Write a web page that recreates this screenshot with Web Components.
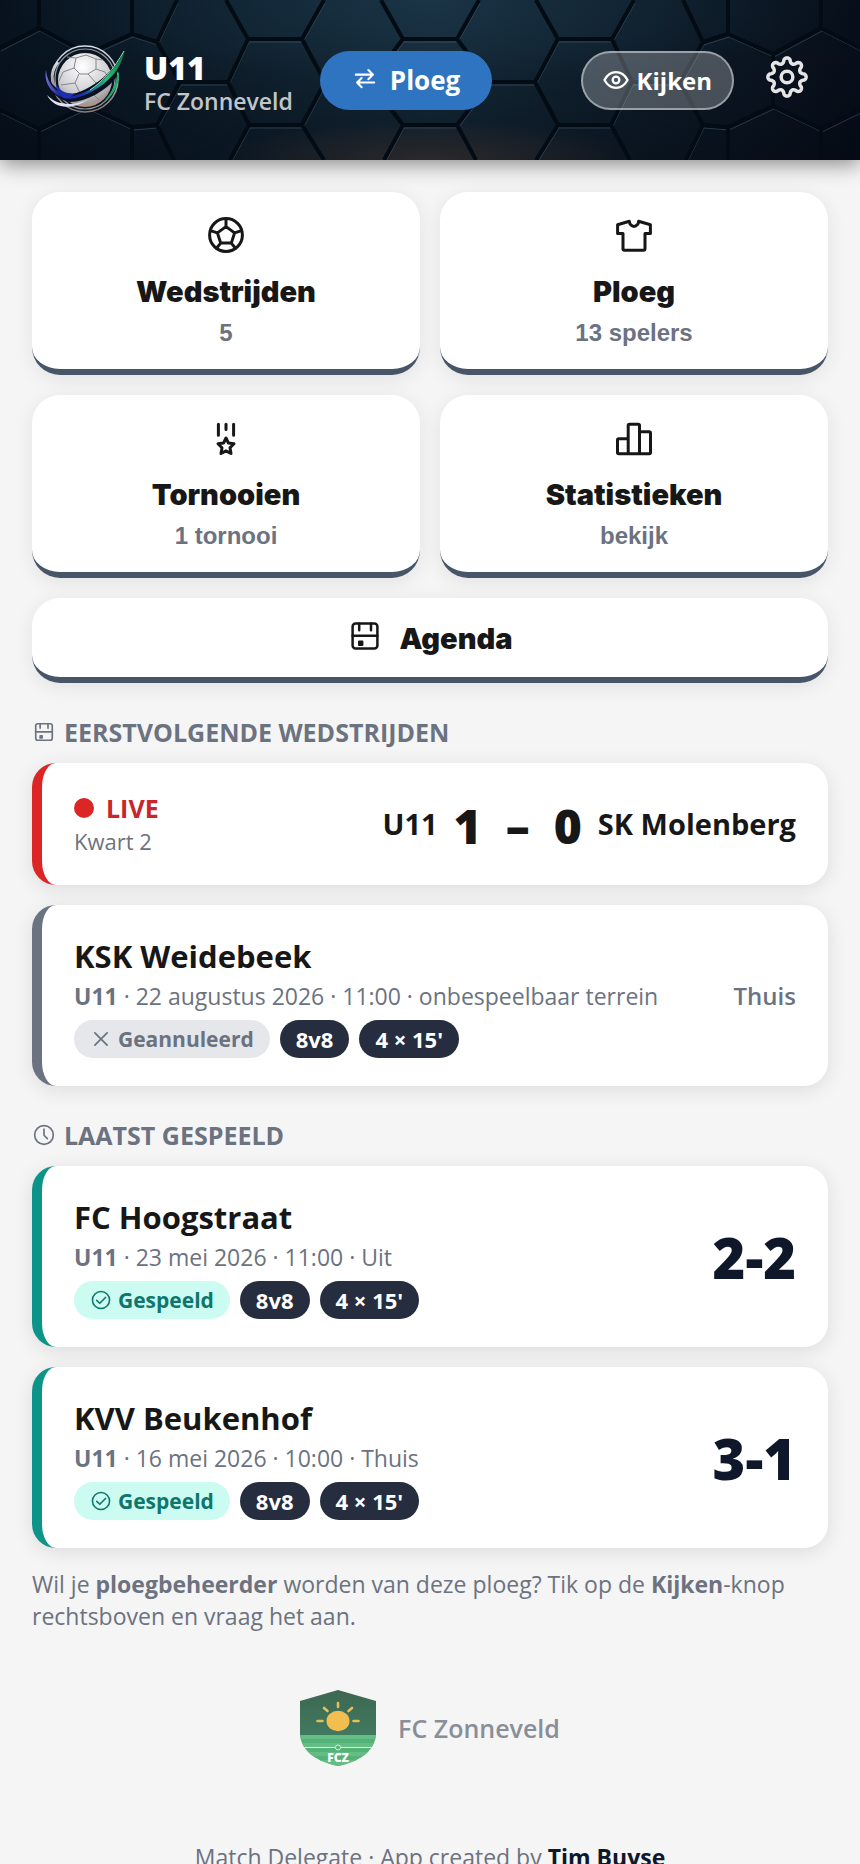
<!DOCTYPE html>
<html lang="nl">
<head>
<meta charset="utf-8">
<meta name="viewport" content="width=device-width, initial-scale=1">
<title>U11 - FC Zonneveld</title>
<style>
    body {
        margin: 0;
        background-color: #f5f5f5;
        color: #171717;
        font-family: "Open Sans", "Noto Sans", sans-serif;
        font-size: 23px;
        line-height: 32px;
    }
    main {
        padding: 32px 32px 0;
    }
    .tiles {
        display: grid;
        grid-template-columns: 1fr 1fr;
        gap: 20px;
    }
    .tiles .wide {
        grid-column: 1 / -1;
    }
    .list {
        display: grid;
        gap: 20px;
    }
    .hint {
        margin: 20px 0 0;
        color: #6b7280;
    }
</style>
</head>
<body>
    <team-header>
        <span slot="team">U11</span>
        <span slot="club">FC Zonneveld</span>
    </team-header>
    <main>
        <nav class="tiles">
            <menu-tile icon="ball">Wedstrijden<span slot="sub">5</span></menu-tile>
            <menu-tile icon="shirt">Ploeg<span slot="sub">13 spelers</span></menu-tile>
            <menu-tile icon="medal">Tornooien<span slot="sub">1 tornooi</span></menu-tile>
            <menu-tile icon="stats">Statistieken<span slot="sub">bekijk</span></menu-tile>
            <menu-tile icon="calendar" class="wide" row>Agenda</menu-tile>
        </nav>

        <section-title icon="calendar">Eerstvolgende wedstrijden</section-title>
        <div class="list">
            <live-card>
                <span slot="period">Kwart 2</span>
                <span slot="home">U11</span>
                <span slot="home-goals">1</span>
                <span slot="away-goals">0</span>
                <span slot="away">SK Molenberg</span>
            </live-card>
            <match-card class="cancelled">
                <span slot="opponent">KSK Weidebeek</span>
                <span slot="info"><b>U11</b> · 22 augustus 2026 · 11:00 · onbespeelbaar terrein</span>
                <match-badge slot="badges" icon="cross" class="cancelled">Geannuleerd</match-badge>
                <match-badge slot="badges">8v8</match-badge>
                <match-badge slot="badges">4 × 15'</match-badge>
                <span slot="place">Thuis</span>
            </match-card>
        </div>

        <section-title icon="clock">Laatst gespeeld</section-title>
        <div class="list">
            <match-card class="played">
                <span slot="opponent">FC Hoogstraat</span>
                <span slot="info"><b>U11</b> · 23 mei 2026 · 11:00 · Uit</span>
                <match-badge slot="badges" icon="check" class="played">Gespeeld</match-badge>
                <match-badge slot="badges">8v8</match-badge>
                <match-badge slot="badges">4 × 15'</match-badge>
                <span slot="score">2-2</span>
            </match-card>
            <match-card class="played">
                <span slot="opponent">KVV Beukenhof</span>
                <span slot="info"><b>U11</b> · 16 mei 2026 · 10:00 · Thuis</span>
                <match-badge slot="badges" icon="check" class="played">Gespeeld</match-badge>
                <match-badge slot="badges">8v8</match-badge>
                <match-badge slot="badges">4 × 15'</match-badge>
                <span slot="score">3-1</span>
            </match-card>
        </div>

        <p class="hint">Wil je <b>ploegbeheerder</b> worden van deze ploeg? Tik op de <b>Kijken</b>-knop rechtsboven en vraag het aan.</p>
    </main>
    <club-footer>
        FC Zonneveld
        <span slot="credits">Match Delegate · App created by</span>
        <span slot="author">Tim Buyse</span>
    </club-footer>

<script>
    const icons = {
        ball: `<g stroke-width="3"><circle cx="18" cy="18" r="16.4"/><path d="M18 9.6l8.6 6.3-3.3 10.2H12.7L9.4 15.9zM18 9.6V2M26.6 15.9l7-2.3M23.3 26.1l4.2 5.2M12.7 26.1l-4.2 5.2M9.4 15.9l-7-2.3"/></g>`,
        shirt: `<path stroke-width="3" d="M13.4 4.2L1.6 7.8v8.8h5.4v15.2q0 1.4 1.4 1.4h19.2q1.4 0 1.4-1.4V16.6h5.4V7.8L22.6 4.2v.6c0 2-2 4.6-4.6 4.6s-4.6-2.6-4.6-4.6z"/>`,
        medal: `<path stroke-width="3" d="M10.4 4.2v11M18 4.2v5.4M25.6 4.2v11M18 18l2.4 5 5.6.8-4 3.9 1 5.8-5-2.6-5 2.6 1-5.8-4-3.9 5.6-.8z"/>`,
        stats: `<path stroke-width="3" d="M12.2 18.8H2.8q-1.3 0-1.3 1.3v12.4q0 1.3 1.3 1.3h30.4q1.3 0 1.3-1.3V13.1q0-1.3-1.3-1.3h-9.7M12.2 33.8V5.5q0-1.3 1.3-1.3h8.7q1.3 0 1.3 1.3v28.3"/>`,
        calendar: `<rect x="5.6" y="5.6" width="24.8" height="24.8" rx="3" stroke-width="2.5"/><path stroke-width="2.5" d="M5.6 17.8h24.8M12.2 5.6v6.6M24 5.6v6.6"/><path stroke-width="2" fill="currentColor" d="M12 23.6h3.4V27H12z"/>`,
        clock: `<g stroke-width="2.5"><circle cx="18" cy="18" r="14"/><path d="M18 9v9.4l5 5"/></g>`,
        cross: `<path stroke-width="2.8" d="M8 8l20 20M28 8L8 28"/>`,
        check: `<g stroke-width="2.6"><circle cx="18" cy="18" r="14"/><path d="M11 18.6l5 4.8 9.4-9.6"/></g>`,
        swap: `<path stroke-width="3.4" d="M3 12.5h28M23.5 5l7.5 7.5-7.5 7.5M33 25.5H6M12.5 18L5 25.5l7.5 7.5"/>`,
        eye: `<g stroke-width="3.2"><path d="M2 18C10 3.5 26 3.5 34 18 26 32.5 10 32.5 2 18z"/><circle cx="18" cy="18" r="4.6"/></g>`,
        gear: `<g stroke-width="3"><path d="${gearPath()}"/><circle cx="18" cy="18" r="5"/></g>`
    };

    // eight round teeth
    function gearPath() {
        const points = [];
        for (let i = 0; i <= 144; i++) {
            const a = i / 144 * Math.PI * 2;
            const wave = Math.cos(a * 8);
            const r = 14.2 + 2.2 * Math.sign(wave) * Math.pow(Math.abs(wave), 0.6);
            points.push((18 + r * Math.sin(a)).toFixed(2) + ' ' + (18 - r * Math.cos(a)).toFixed(2));
        }
        return 'M' + points.join('L') + 'z';
    }

    class BaseElement extends HTMLElement {
        constructor() {
            super();
            this.attachShadow({mode: 'open'});
        }
        connectedCallback() {
            if (this.shadowRoot.childNodes.length) return;
            const template = document.createElement('template');
            template.innerHTML = `<style>${this.getStyles()}</style>${this.getTemplate()}`;
            this.shadowRoot.appendChild(template.content.cloneNode(true));
        }
        getIcon() {
            return this.hasAttribute('icon') ? `<app-icon name="${this.getAttribute('icon')}"></app-icon>` : '';
        }
    }

    class AppIcon extends BaseElement {
        getTemplate() {
            return `<svg viewBox="0 0 36 36" fill="none" stroke="currentColor" stroke-linecap="round" stroke-linejoin="round" aria-hidden="true">${icons[this.getAttribute('name')]}</svg>`;
        }
        getStyles() {
            return `
                :host {
                    display: block;
                    flex: none;
                    width: 36px;
                    height: 36px;
                }
                svg {
                    display: block;
                    width: 100%;
                    height: 100%;
                }
            `;
        }
    }

    class TeamHeader extends BaseElement {
        getTemplate() {
            return `
                <svg class="bg" viewBox="0 0 860 160" preserveAspectRatio="xMidYMid slice" aria-hidden="true">
                    <defs>
                        <linearGradient id="base" x2="1">
                            <stop offset="0" stop-color="#07121e"/>
                            <stop offset=".5" stop-color="#152a39"/>
                            <stop offset="1" stop-color="#070e19"/>
                        </linearGradient>
                        <radialGradient id="light" cx=".5" cy="0" r=".5">
                            <stop offset="0" stop-color="#28536c" stop-opacity=".25"/>
                            <stop offset="1" stop-color="#28536c" stop-opacity="0"/>
                        </radialGradient>
                        <radialGradient id="warm" cx=".5" cy="1" r=".25">
                            <stop offset="0" stop-color="#332c2b" stop-opacity=".8"/>
                            <stop offset="1" stop-color="#332c2b" stop-opacity="0"/>
                        </radialGradient>
                        <linearGradient id="shade" x2="0" y2="1">
                            <stop offset=".3" stop-color="#02060e" stop-opacity="0"/>
                            <stop offset="1" stop-color="#02060e" stop-opacity=".4"/>
                        </linearGradient>
                        <path id="half" d="M0 48L39 28V0M39 28L87 54V106L39 129V160M0 110L39 129M87 54L132 34V0M132 34L157 42L177 0M157 42L180 82L157 125L132 127V160M132 127L87 106M157 125L174 160M180 82H228L248 39L226 0M248 39H302L324 0M302 39L325 82L302 125L324 160M302 125H249L228 82M249 125L230 160M325 82H370L403 39L381 0M370 82L403 125L384 160"/>
                        <g id="cells">
                            <use href="#half"/>
                            <use href="#half" transform="translate(860) scale(-1 1)"/>
                            <path d="M403 39H457M403 125H457"/>
                        </g>
                    </defs>
                    <path fill="url(#base)" d="M0 0h860v160H0z"/>
                    <path fill="url(#light)" d="M0 0h860v160H0z"/>
                    <path fill="url(#shade)" d="M0 0h860v160H0z"/>
                    <path fill="url(#warm)" d="M0 0h860v160H0z"/>
                    <use href="#cells" fill="none" stroke="#6f8ea3" stroke-opacity=".3" stroke-width="1" transform="translate(1 3)"/>
                    <use href="#cells" fill="none" stroke="#030b14" stroke-width="4"/>
                </svg>
                <header>
                    <svg class="logo" viewBox="0 0 88 76" aria-hidden="true">
                        <defs>
                            <radialGradient id="ball" cx=".45" cy=".25" r=".8">
                                <stop offset="0" stop-color="#ffffff"/>
                                <stop offset=".6" stop-color="#cfcfd3"/>
                                <stop offset=".85" stop-color="#a39c9c"/>
                                <stop offset="1" stop-color="#c08457"/>
                            </radialGradient>
                            <linearGradient id="swoosh" x2="1">
                                <stop offset="0" stop-color="#6d72d0"/>
                                <stop offset=".2" stop-color="#151a8c"/>
                                <stop offset=".45" stop-color="#1b2fb0"/>
                                <stop offset=".62" stop-color="#147f92"/>
                                <stop offset=".78" stop-color="#25c271"/>
                                <stop offset="1" stop-color="#0c6b46"/>
                            </linearGradient>
                            <linearGradient id="rim" x2="0" y2="1">
                                <stop offset="0" stop-color="#d9dde8"/>
                                <stop offset="1" stop-color="#8a7a74"/>
                            </linearGradient>
                        </defs>
                        <circle cx="47" cy="37" r="33" fill="#0b1520" stroke="url(#rim)" stroke-width="1.5"/>
                        <circle cx="47" cy="37" r="30" fill="none" stroke="#8b95a5" stroke-width="1.2"/>
                        <circle cx="47" cy="38" r="27" fill="url(#ball)"/>
                        <path fill="none" stroke="#85858c" stroke-width="1" d="M38 16l10-3 10 4v10l-8 5h-8l-6-6zM36 26l-11 4-4 9M41 32l-4 9 5 10h12l4-10-8-9M58 27l9 3 5 8M38 16l-9-1M58 17l7 1M37 41l-14 2M58 41l12-1M42 51l-6 9M54 51l7 7"/>
                        <path fill="none" stroke="url(#rim)" stroke-width="3" d="M20 20C10 32 14 46 24 51"/>
                        <path fill="#0a0f24" d="M7 26c-3 14 8 31 25 34 16 0 38-12 46-25l9-27C76 29 57 46 35 52 20 52 10 40 7 26z"/>
                        <path fill="url(#swoosh)" d="M8 28c1 12 9 24 24 26C56 52 76 30 87 8c-3 12-7 20-13 26-11 12-27 21-42 23C16 56 5 42 8 28z"/>
                        <path fill="#1b2fb0" d="M18 42c4 7 11 11 19 9-3 4-7 6-11 5-5-3-8-8-8-14z"/>
                        <path fill="#dfe3f5" d="M9 53c9 10 26 12 42 4-14 10-34 12-42-4z"/>
                        <path fill="#20a869" d="M81 30c1 13-6 24-16 31 8-10 13-18 14-28z"/>
                        <path fill="none" stroke="#8fe6c0" stroke-width="1" d="M52 48C64 40 76 27 86 9"/>
                    </svg>
                    <div class="names">
                        <h1><slot name="team"></slot></h1>
                        <slot name="club"></slot>
                    </div>
                    <button class="switch"><app-icon name="swap"></app-icon>Ploeg</button>
                    <button class="view"><app-icon name="eye"></app-icon>Kijken</button>
                    <button class="settings" aria-label="Instellingen"><app-icon name="gear"></app-icon></button>
                </header>
            `;
        }
        getStyles() {
            return `
                :host {
                    display: block;
                    position: relative;
                    box-shadow: 0 4px 20px rgba(0, 0, 0, .45);
                }
                .bg {
                    position: absolute;
                    inset: 0;
                    width: 100%;
                    height: 100%;
                }
                header {
                    position: relative;
                    display: flex;
                    align-items: center;
                    padding: 42px 52px 42px 38px;
                }
                .logo {
                    width: 88px;
                    height: 76px;
                    margin-right: 18px;
                }
                .names {
                    margin-right: 27px;
                    padding-top: 8px;
                    color: rgba(255, 255, 255, .75);
                    font-weight: 600;
                    white-space: nowrap;
                }
                h1 {
                    margin: 0;
                    color: #fff;
                    font-size: 32px;
                    line-height: 34px;
                    font-weight: 800;
                }
                button {
                    display: flex;
                    align-items: center;
                    box-sizing: border-box;
                    height: 59px;
                    border: 0;
                    border-radius: 30px;
                    color: #fff;
                    font-family: inherit;
                    font-size: 24px;
                    font-weight: 700;
                }
                .switch {
                    gap: 14px;
                    padding: 0 32px 0 34px;
                    background-color: #2f74c0;
                    font-size: 26px;
                }
                .switch app-icon {
                    width: 22px;
                    height: 22px;
                    margin-bottom: 4px;
                }
                .view {
                    gap: 8px;
                    margin-left: auto;
                    padding: 0 20px;
                    border: 2px solid rgba(255, 255, 255, .45);
                    background-color: rgba(255, 255, 255, .25);
                }
                .view app-icon {
                    width: 26px;
                    height: 26px;
                }
                .settings {
                    margin-left: 32px;
                    padding: 0 0 6px;
                    background: none;
                    color: #e5e5e5;
                }
                .settings app-icon {
                    width: 42px;
                    height: 42px;
                }
            `;
        }
    }

    class MenuTile extends BaseElement {
        getTemplate() {
            const sub = this.hasAttribute('row') ? '' : '<small><slot name="sub"></slot></small>';
            return `<button>${this.getIcon()}<strong><slot></slot></strong>${sub}</button>`;
        }
        getStyles() {
            return `
                :host {
                    display: block;
                }
                button {
                    display: flex;
                    flex-direction: column;
                    align-items: center;
                    width: 100%;
                    padding: 25px 24px 22px;
                    border: 0;
                    border-bottom: 6px solid #475569;
                    border-radius: 28px;
                    background-color: #fff;
                    box-shadow: 0 4px 20px rgba(0, 0, 0, .08);
                    color: #171717;
                }
                strong {
                    margin-top: 22px;
                    font: 900 29px/34px Inter, sans-serif;
                }
                small {
                    margin-top: 10px;
                    color: #6b7280;
                    font: bold 24px/28px "Liberation Sans", sans-serif;
                }
                :host([row]) button {
                    flex-direction: row;
                    justify-content: center;
                    gap: 16px;
                    padding: 20px 24px;
                }
                :host([row]) strong {
                    margin: 4px 0 1px;
                }
                :host([row]) app-icon {
                    align-self: flex-start;
                }
            `;
        }
    }

    class SectionTitle extends BaseElement {
        getTemplate() {
            return `<h2>${this.getIcon()}<slot></slot></h2>`;
        }
        getStyles() {
            return `
                :host {
                    display: block;
                    margin: 33px 0 15px;
                }
                h2 {
                    display: flex;
                    align-items: center;
                    gap: 8px;
                    margin: 0;
                    color: #6b7280;
                    font-size: 25px;
                    font-weight: 700;
                    text-transform: uppercase;
                }
                app-icon {
                    width: 24px;
                    height: 24px;
                }
            `;
        }
    }

    const cardStyles = `
        :host {
            display: flex;
            align-items: center;
            justify-content: space-between;
            padding: 28px 32px;
            border-left: 10px solid #6b7280;
            border-radius: 24px;
            background-color: #fff;
            box-shadow: 0 4px 20px rgba(0, 0, 0, .1);
        }
    `;

    class LiveCard extends BaseElement {
        getTemplate() {
            return `
                <div>
                    <div class="live"><i></i>LIVE</div>
                    <div class="period"><slot name="period"></slot></div>
                </div>
                <div class="score">
                    <slot name="home"></slot>
                    <strong><slot name="home-goals"></slot></strong>
                    <strong class="dash">–</strong>
                    <strong><slot name="away-goals"></slot></strong>
                    <slot name="away"></slot>
                </div>
            `;
        }
        getStyles() {
            return cardStyles + `
                :host {
                    border-left-color: #dc2626;
                }
                .live {
                    display: flex;
                    align-items: center;
                    gap: 12px;
                    color: #c8262c;
                    font-size: 25px;
                    font-weight: 700;
                    line-height: 34px;
                }
                i {
                    width: 20px;
                    height: 20px;
                    border-radius: 50%;
                    background-color: #dc2626;
                }
                .period {
                    color: #6b7280;
                    font-size: 22px;
                }
                .score {
                    display: flex;
                    align-items: center;
                    gap: 16px;
                    font-size: 29px;
                    font-weight: 700;
                }
                strong {
                    padding-top: 3px;
                    font-size: 48px;
                    font-weight: 800;
                }
                .dash {
                    margin: 0 8px;
                }
            `;
        }
    }

    class MatchCard extends BaseElement {
        getTemplate() {
            return `
                <div>
                    <h3><slot name="opponent"></slot></h3>
                    <div class="info"><slot name="info"></slot></div>
                    <div class="badges"><slot name="badges"></slot></div>
                </div>
                <div class="place"><slot name="place"></slot></div>
                <div class="score"><slot name="score"></slot></div>
            `;
        }
        getStyles() {
            return cardStyles + `
                :host(.played) {
                    border-left-color: #0d9488;
                }
                h3 {
                    margin: 0;
                    font-size: 31px;
                    font-weight: 700;
                    line-height: 46px;
                }
                .info {
                    color: #6b7280;
                    line-height: 34px;
                }
                .badges {
                    display: flex;
                    gap: 10px;
                    margin-top: 7px;
                }
                .place {
                    margin-left: auto;
                    color: #6b7280;
                    font-size: 24px;
                    font-weight: 600;
                }
                .score {
                    color: #0f172a;
                    font-size: 56px;
                    font-weight: 800;
                    line-height: 64px;
                }
            `;
        }
    }

    class MatchBadge extends BaseElement {
        getTemplate() {
            return `${this.getIcon()}<slot></slot>`;
        }
        getStyles() {
            return `
                :host {
                    display: flex;
                    align-items: center;
                    gap: 6px;
                    padding: 0 16px;
                    border-radius: 19px;
                    background-color: #262d3f;
                    color: #fff;
                    font-size: 22px;
                    font-weight: 700;
                    line-height: 38px;
                }
                :host([icon]) {
                    font-size: 21px;
                }
                :host(.cancelled) {
                    background-color: #e5e7eb;
                    color: #6b7280;
                }
                :host(.played) {
                    background-color: #ccfbf1;
                    color: #0f766e;
                }
                app-icon {
                    width: 22px;
                    height: 22px;
                }
            `;
        }
    }

    class ClubFooter extends BaseElement {
        getTemplate() {
            return `
                <div class="club">
                    <svg viewBox="0 0 76 76" aria-hidden="true">
                        <defs>
                            <clipPath id="shield"><path d="M38 0l38 11v33c-1 18-18 28-38 32C18 72 1 62 0 44V11z"/></clipPath>
                            <linearGradient id="sky" x2="0" y2="1">
                                <stop offset="0" stop-color="#3d6751"/>
                                <stop offset="1" stop-color="#417a60"/>
                            </linearGradient>
                        </defs>
                        <g clip-path="url(#shield)">
                            <path fill="url(#sky)" d="M0 0h76v46H0z"/>
                            <path fill="#53b276" d="M0 45h76v31H0z"/>
                            <path fill="#64bd84" d="M0 45h76v4H0zM0 53h76v4H0zM0 62h76v4H0zM0 70h76v6H0z"/>
                            <ellipse cx="38" cy="31" rx="11.5" ry="10.2" fill="#f2be50"/>
                            <path stroke="#e8bf55" stroke-width="2.6" stroke-linecap="round" d="M38 13v4M24 18l3.5 3M52 18l-3.5 3M17.5 31h5M53.5 31h5"/>
                            <path stroke="#d9f0e1" d="M0 57.5h76"/>
                            <circle cx="38" cy="57.5" r="2.5" fill="#53b276" stroke="#d9f0e1"/>
                            <text x="38" y="72" text-anchor="middle" font-family="Open Sans, sans-serif" font-size="12" font-weight="800" fill="#fff">FCZ</text>
                        </g>
                    </svg>
                    <slot></slot>
                </div>
                <footer><slot name="credits"></slot> <a href="#"><slot name="author"></slot></a></footer>
            `;
        }
        getStyles() {
            return `
                :host {
                    display: block;
                    padding: 58px 32px 32px;
                    color: #6b7280;
                    text-align: center;
                }
                .club {
                    display: flex;
                    align-items: center;
                    justify-content: center;
                    gap: 22px;
                    margin-bottom: 75px;
                    color: #898e99;
                    font-size: 25px;
                    font-weight: 600;
                }
                .club svg {
                    width: 76px;
                    height: 76px;
                }
                a {
                    color: #0f172a;
                    font-weight: 700;
                    text-decoration: none;
                }
            `;
        }
    }

    customElements.define('app-icon', AppIcon);
    customElements.define('team-header', TeamHeader);
    customElements.define('menu-tile', MenuTile);
    customElements.define('section-title', SectionTitle);
    customElements.define('match-badge', MatchBadge);
    customElements.define('live-card', LiveCard);
    customElements.define('match-card', MatchCard);
    customElements.define('club-footer', ClubFooter);
</script>
</body>
</html>
